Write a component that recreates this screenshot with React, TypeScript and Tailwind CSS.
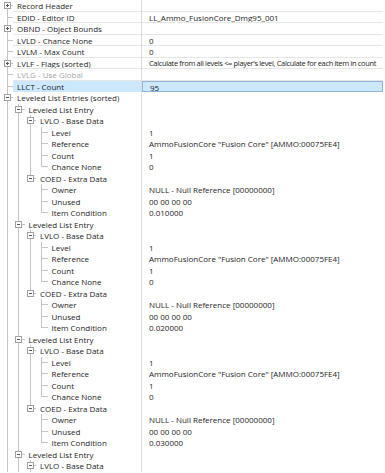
import React from 'react';

type Row = {
  level: number;
  label: string;
  value?: string;
  exp?: 'plus' | 'minus';
  guides: boolean[];
  last?: boolean;
  disabled?: boolean;
  selected?: boolean;
  lined?: boolean;
  tight?: boolean;
};

const ROW_H = 11.5;
const cx = (l: number) => Math.floor(7 + 11.5 * l) + 0.5;

const top: Row[] = [
  { level: 0, label: 'Record Header', exp: 'plus', guides: [], lined: true },
  { level: 0, label: 'EDID - Editor ID', value: 'LL_Ammo_FusionCore_Dmg95_001', guides: [], lined: true },
  { level: 0, label: 'OBND - Object Bounds', exp: 'plus', guides: [], lined: true },
  { level: 0, label: 'LVLD - Chance None', value: '0', guides: [], lined: true },
  { level: 0, label: 'LVLM - Max Count', value: '0', guides: [], lined: true },
  {
    level: 0,
    label: 'LVLF - Flags (sorted)',
    value: "Calculate from all levels <= player's level, Calculate for each item in count",
    exp: 'plus',
    guides: [],
    lined: true,
    tight: true,
  },
  { level: 0, label: 'LVLG - Use Global', guides: [], disabled: true, lined: true },
  { level: 0, label: 'LLCT - Count', value: '95', guides: [], selected: true },
  { level: 0, label: 'Leveled List Entries (sorted)', exp: 'minus', guides: [] },
];

function entry(cond: string): Row[] {
  return [
    { level: 1, label: 'Leveled List Entry', exp: 'minus', guides: [true] },
    { level: 2, label: 'LVLO - Base Data', exp: 'minus', guides: [true, true] },
    { level: 3, label: 'Level', value: '1', guides: [true, true, true] },
    { level: 3, label: 'Reference', value: 'AmmoFusionCore "Fusion Core" [AMMO:00075FE4]', guides: [true, true, true] },
    { level: 3, label: 'Count', value: '1', guides: [true, true, true] },
    { level: 3, label: 'Chance None', value: '0', guides: [true, true, true], last: true },
    { level: 2, label: 'COED - Extra Data', exp: 'minus', guides: [true, true], last: true },
    { level: 3, label: 'Owner', value: 'NULL - Null Reference [00000000]', guides: [true, true, false] },
    { level: 3, label: 'Unused', value: '00 00 00 00', guides: [true, true, false] },
    { level: 3, label: 'Item Condition', value: cond, guides: [true, true, false], last: true },
  ];
}

const rows: Row[] = [
  ...top,
  ...entry('0.010000'),
  ...entry('0.020000'),
  ...entry('0.030000'),
  { level: 1, label: 'Leveled List Entry', exp: 'minus', guides: [true] },
  { level: 2, label: 'LVLO - Base Data', exp: 'minus', guides: [true, true] },
];

function TreeLines({ row, first }: { row: Row; first: boolean }) {
  const w = 13 + 11.5 * row.level;
  const mid = Math.floor(ROW_H / 2) + 0.5;
  const c = cx(row.level);
  return (
    <svg width={w} height={ROW_H} className="shrink-0 block" shapeRendering="crispEdges">
      {row.guides.map((g, i) =>
        g ? <line key={i} x1={cx(i)} y1={0} x2={cx(i)} y2={ROW_H} stroke="#c4c4c4" strokeWidth={1} /> : null,
      )}
      <line x1={c} y1={first ? mid : 0} x2={c} y2={row.last ? mid : ROW_H} stroke="#c4c4c4" strokeWidth={1} />
      <line x1={c} y1={mid} x2={c + 6} y2={mid} stroke="#c4c4c4" strokeWidth={1} />
      {row.exp && (
        <g>
          <rect x={c - 3} y={mid - 3} width={6} height={6} fill="#fff" stroke="#a0a0a0" strokeWidth={1} />
          <line x1={c - 1.5} y1={mid} x2={c + 1.5} y2={mid} stroke="#555" strokeWidth={1} />
          {row.exp === 'plus' && <line x1={c} y1={mid - 1.5} x2={c} y2={mid + 1.5} stroke="#555" strokeWidth={1} />}
        </g>
      )}
    </svg>
  );
}

export default function App() {
  return (
    <div
      className="w-[385px] h-[473px] bg-white overflow-hidden text-[8px] text-[#1e1e1e]"
      style={{ fontFamily: '"Open Sans", "Noto Sans", sans-serif' }}
    >
      {rows.map((row, i) => (
        <div key={i} className="flex h-[11.5px] leading-[11.5px]">
          <div className="flex w-[142px] shrink-0 border-r border-[#dcdcdc]">
            <TreeLines row={row} first={i === 0} />
            <div
              className={
                'flex-1 pl-1 whitespace-nowrap overflow-hidden ' +
                (row.lined ? 'border-b border-[#e6e6e6] ' : '') +
                (row.selected ? 'bg-[#cce8ff] ' : '') +
                (row.disabled ? 'text-[#a8a8a8]' : '')
              }
            >
              {row.label}
            </div>
          </div>
          <div
            className={
              'flex-1 mr-[2px] pl-[7px] whitespace-nowrap overflow-hidden ' +
              (row.lined ? 'border-b border-[#e6e6e6] ' : '') +
              (row.tight ? 'text-[7.5px] tracking-[-0.35px] ' : '') +
              (row.selected ? 'bg-[#cce8ff] border border-[#8fb3d9] pl-[6px]' : '')
            }
          >
            {row.value}
          </div>
        </div>
      ))}
    </div>
  );
}
